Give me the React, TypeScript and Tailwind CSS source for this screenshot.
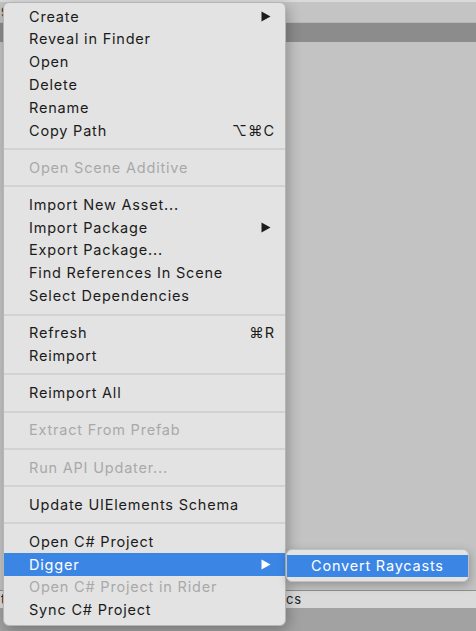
import React from 'react'

type Item =
  | { kind: 'sep' }
  | { kind: 'item'; label: string; disabled?: boolean; shortcut?: string; sub?: boolean; active?: boolean }

const items: Item[] = [
  { kind: 'item', label: 'Create', sub: true },
  { kind: 'item', label: 'Reveal in Finder' },
  { kind: 'item', label: 'Open' },
  { kind: 'item', label: 'Delete' },
  { kind: 'item', label: 'Rename' },
  { kind: 'item', label: 'Copy Path', shortcut: '⌥⌘C' },
  { kind: 'sep' },
  { kind: 'item', label: 'Open Scene Additive', disabled: true },
  { kind: 'sep' },
  { kind: 'item', label: 'Import New Asset...' },
  { kind: 'item', label: 'Import Package', sub: true },
  { kind: 'item', label: 'Export Package...' },
  { kind: 'item', label: 'Find References In Scene' },
  { kind: 'item', label: 'Select Dependencies' },
  { kind: 'sep' },
  { kind: 'item', label: 'Refresh', shortcut: '⌘R' },
  { kind: 'item', label: 'Reimport' },
  { kind: 'sep' },
  { kind: 'item', label: 'Reimport All' },
  { kind: 'sep' },
  { kind: 'item', label: 'Extract From Prefab', disabled: true },
  { kind: 'sep' },
  { kind: 'item', label: 'Run API Updater...', disabled: true },
  { kind: 'sep' },
  { kind: 'item', label: 'Update UIElements Schema' },
  { kind: 'sep' },
  { kind: 'item', label: 'Open C# Project' },
  { kind: 'item', label: 'Digger', sub: true, active: true },
  { kind: 'item', label: 'Open C# Project in Rider', disabled: true },
  { kind: 'item', label: 'Sync C# Project' },
]

function Arrow({ white }: { white?: boolean }) {
  return (
    <svg width="10" height="11" viewBox="0 0 10 11" className="block">
      <path d="M0.5 0.5 L9.5 5.5 L0.5 10.5 Z" fill={white ? '#ffffff' : '#1c1c1c'} />
    </svg>
  )
}

export default function App() {
  return (
    <div
      className="relative w-[476px] h-[631px] overflow-hidden flex flex-col bg-[#c3c3c3] text-[14.5px] tracking-[0.8px]"
      style={{ fontFamily: 'Inter, "Liberation Sans", sans-serif' }}
    >
      {/* fondo: ventana de Unity detras del menu */}
      <div className="h-[2px] bg-[#dadada]" />
      <div className="h-[20px] bg-[#c4c4c4] text-[13px] leading-[20px] pl-[1px] text-[#333]">9</div>
      <div className="h-[20px] bg-[#8c8c8c] border-t border-[#b8b8b8]" />
      <div className="flex-1 bg-[#c3c3c3]" />
      <div className="h-[1px] bg-[#8e8e8e]" />
      <div className="h-[17px] bg-[#dadada] flex justify-between text-[13px] leading-[17px] text-[#222]">
        <span className="pl-[1px]">t</span>
        <span className="w-[190px]">cs</span>
      </div>
      <div className="h-[23px] bg-[#a2a2a2]" />

      {/* menu contextual */}
      <div className="absolute left-[3px] top-[2px] w-[283px] rounded-[6px] bg-[#e3e3e3] border border-[#b5b5b5] shadow-[2px_4px_14px_rgba(0,0,0,0.28)] pt-[2px] pb-[3px] flex flex-col">
        {items.map((it, i) =>
          it.kind === 'sep' ? (
            <div key={i} className="py-[6.2px]">
              <div className="h-[2px] bg-[#d2d2d2]" />
            </div>
          ) : (
            <div
              key={i}
              className={`h-[22.8px] flex items-center pl-[25px] pr-[10px] ${
                it.active ? 'bg-[#3b86e5] text-white' : it.disabled ? 'text-[#a9a9a9]' : 'text-[#1b1b1b]'
              }`}
            >
              <span className="flex-1">{it.label}</span>
              {it.shortcut && <span className="tracking-[1px]">{it.shortcut}</span>}
              {it.sub && (
                <span className="pr-[4px]">
                  <Arrow white={it.active} />
                </span>
              )}
            </div>
          ),
        )}
      </div>

      {/* submenu */}
      <div className="absolute left-[286px] top-[549px] w-[183px] h-[33px] rounded-[6px] bg-[#e3e3e3] border border-[#c0c0c0] shadow-[1px_3px_10px_rgba(0,0,0,0.25)] py-[5px]">
        <div className="h-[22px] bg-[#3b86e5] text-white flex items-center pl-[24px]">Convert Raycasts</div>
      </div>
    </div>
  )
}
